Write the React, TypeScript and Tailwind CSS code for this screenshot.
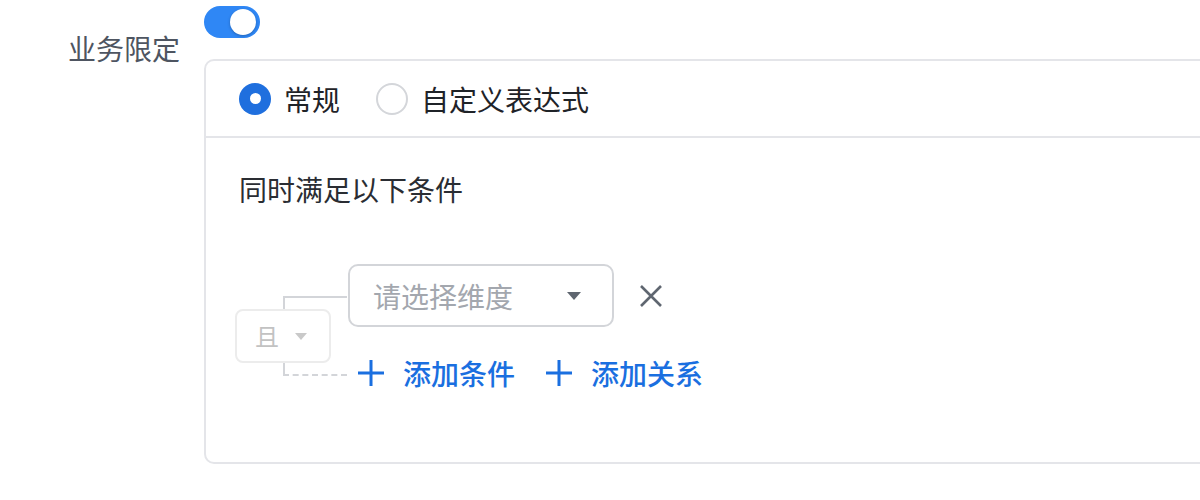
const Caret = ({ className }: { className: string }) => (
  <svg viewBox="0 0 14 8" className={className} fill="currentColor">
    <path d="M0 0h14L7 8z" />
  </svg>
);

const PlusIcon = () => (
  <svg viewBox="0 0 28 28" className="w-[28px] h-[28px]" stroke="currentColor" strokeWidth={3} fill="none">
    <path d="M14 1v26M1 14h26" />
  </svg>
);

const CloseIcon = () => (
  <svg viewBox="0 0 22 22" className="w-[22px] h-[22px] text-[#5f6670]" stroke="currentColor" strokeWidth={2.6} fill="none">
    <path d="M1 1l20 20M21 1L1 21" />
  </svg>
);

const Radio = ({ checked, label }: { checked?: boolean; label: string }) => (
  <label className="flex items-center gap-[13px] cursor-pointer">
    {checked ? (
      <span className="w-[32px] h-[32px] rounded-full bg-[#1f6fde] flex items-center justify-center">
        <span className="w-[11px] h-[11px] rounded-full bg-white" />
      </span>
    ) : (
      <span className="w-[32px] h-[32px] rounded-full border-2 border-[#d4d6da] bg-white" />
    )}
    <span className="text-[28px] leading-[42px] text-[#1f2328]">{label}</span>
  </label>
);

const App = () => {
  return (
    <div
      className="w-[1200px] h-[500px] overflow-hidden bg-white flex"
      style={{ fontFamily: '"Noto Sans CJK SC", "Noto Sans", sans-serif' }}
    >
      {/* Label column */}
      <div className="w-[180px] shrink-0 text-right pt-[27px]">
        <span className="text-[28px] leading-[42px] text-[#4e5561]">业务限定</span>
      </div>

      {/* Content column */}
      <div className="ml-[24px] w-[1100px] shrink-0 pt-[6px]">
        {/* Switch */}
        <button className="relative w-[56px] h-[32px] rounded-full bg-[#2f87f5] block">
          <span className="absolute right-[4px] top-[3px] w-[26px] h-[26px] rounded-full bg-white shadow-[0_1px_3px_rgba(0,0,0,0.25)]" />
        </button>

        {/* Rule box */}
        <div className="mt-[21px] border-2 border-[#e4e5e9] rounded-[10px] h-[405px]">
          <div className="h-[77px] flex items-center gap-[36px] pl-[33px] border-b-2 border-[#e4e5e9]">
            <Radio checked label="常规" />
            <Radio label="自定义表达式" />
          </div>

          <div className="pl-[33px] pt-[30px]">
            <div className="text-[28px] leading-[42px] text-[#2a2d33]">同时满足以下条件</div>

            {/* Condition tree */}
            <div className="relative flex mt-[54px] ml-[-4px]">
              <div className="absolute left-[48px] top-[32px] w-[64px] h-[13px] border-l-2 border-t-2 border-[#d3d5d9]" />
              <div className="absolute left-[48px] top-[99px] w-[2px] h-[12px] bg-[#d3d5d9]" />
              <div className="absolute left-[48px] top-[110px] w-[64px] border-t-2 border-dashed border-[#d3d5d9]" />

              <div className="pt-[45px]">
                <div className="w-[96px] h-[54px] border-2 border-[#ececec] rounded-[8px] bg-white flex items-center pl-[18px] gap-[16px]">
                  <span className="text-[24px] leading-none text-[#c2c2c2]">且</span>
                  <Caret className="w-[12px] h-[7px] text-[#c9c9c9]" />
                </div>
              </div>

              <div className="ml-[17px]">
                <div className="flex items-center">
                  <div className="w-[266px] h-[63px] border-2 border-[#d3d5d9] rounded-[10px] bg-white flex items-center justify-between pl-[23px] pr-[31px]">
                    <span className="text-[28px] leading-[42px] text-[#a3a7ae]">请选择维度</span>
                    <Caret className="w-[14px] h-[8px] text-[#5f6670]" />
                  </div>
                  <span className="ml-[26px]">
                    <CloseIcon />
                  </span>
                </div>
                <div className="flex items-center mt-[29px] text-[#1a6fe0]">
                  <button className="flex items-center gap-[18px] ml-[9px]">
                    <PlusIcon />
                    <span className="text-[28px] leading-[34px] font-medium">添加条件</span>
                  </button>
                  <button className="flex items-center gap-[18px] ml-[30px]">
                    <PlusIcon />
                    <span className="text-[28px] leading-[34px] font-medium">添加关系</span>
                  </button>
                </div>
              </div>
            </div>
          </div>
        </div>
      </div>
    </div>
  );
};

export default App;
